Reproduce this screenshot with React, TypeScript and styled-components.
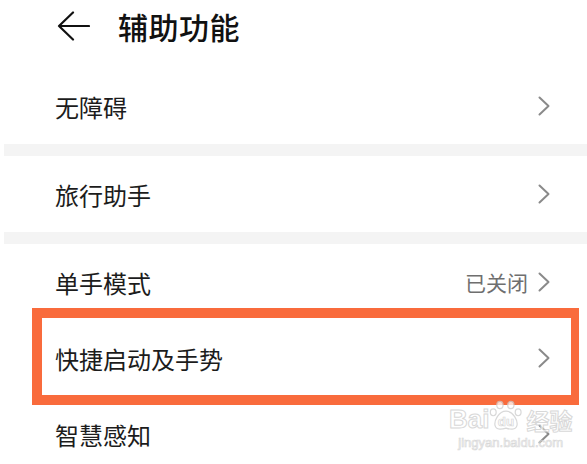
import React from "react";
import styled, { createGlobalStyle } from "styled-components";

const GlobalStyle = createGlobalStyle`
  html, body {
    margin: 0;
    padding: 0;
    background: #ffffff;
  }
  body {
    font-family: "Noto Sans CJK SC", "Noto Sans", sans-serif;
    overflow: hidden;
  }
`;

const Page = styled.div`
  width: 587px;
  height: 464px;
  position: relative;
  overflow: hidden;
  background: #ffffff;
`;

const Header = styled.div`
  height: 68px;
  box-sizing: border-box;
  padding: 0 0 17px 57px;
  display: flex;
  align-items: center;
  gap: 28px;
`;

const Title = styled.h1`
  margin: 0;
  font-size: 30px;
  font-weight: 500;
  color: #111111;
  letter-spacing: 0.5px;
`;

const Section = styled.div`
  display: flex;
  flex-direction: column;
`;

const Divider = styled.div`
  height: 12px;
  margin-left: 4px;
  background: #f4f4f4;
`;

const Row = styled.div`
  position: relative;
  height: 76px;
  display: flex;
  align-items: center;
  padding: 0 37px 0 55px;
`;

const Label = styled.span`
  flex: 1;
  font-size: 24px;
  color: #1c1c1c;
`;

const Value = styled.span`
  font-size: 21px;
  color: #6f6f6f;
  margin-right: 10px;
`;

const Highlight = styled.div`
  position: absolute;
  left: 32px;
  right: 8px;
  top: -12px;
  bottom: -9px;
  border: 10px solid #f96b3c;
  border-right-width: 8px;
  pointer-events: none;
`;

const Watermark = styled.div`
  position: absolute;
  left: 449px;
  top: 400px;
  display: flex;
  flex-direction: column;
  align-items: center;
  opacity: 0.75;
  pointer-events: none;
`;

const MarkLine = styled.div`
  display: flex;
  align-items: flex-end;
  font-family: "Liberation Sans", Arial, sans-serif;
  font-size: 26px;
  font-weight: 700;
  color: #ffffff;
  -webkit-text-stroke: 1px #cccccc;
  line-height: 1;
`;

const MarkCn = styled.span`
  font-family: "Noto Sans CJK SC", sans-serif;
  font-size: 23px;
  margin-left: 3px;
`;

const MarkUrl = styled.div`
  font-family: "Liberation Sans", Arial, sans-serif;
  font-size: 13px;
  color: #ffffff;
  -webkit-text-stroke: 0.7px #cccccc;
  margin-top: 3px;
`;

const BackArrow = () => (
  <svg width="33" height="30" viewBox="0 0 33 30">
    <path
      d="M16 1.5 L2 15 L16 28.5 M2 15 L32 15"
      fill="none"
      stroke="#111"
      strokeWidth="2.2"
      strokeLinecap="round"
      strokeLinejoin="round"
    />
  </svg>
);

const Chevron = () => (
  <svg width="12" height="20" viewBox="0 0 12 20">
    <path
      d="M1.5 1.5 L10.5 10 L1.5 18.5"
      fill="none"
      stroke="#8a8a8a"
      strokeWidth="2"
      strokeLinecap="round"
      strokeLinejoin="round"
    />
  </svg>
);

const Paw = () => (
  <svg width="34" height="32" viewBox="0 0 28 26">
    <g fill="#fff" stroke="#cccccc" strokeWidth="1">
      <ellipse cx="9" cy="4" rx="2.6" ry="3" />
      <ellipse cx="18" cy="4" rx="2.6" ry="3" />
      <ellipse cx="3.5" cy="10" rx="2.4" ry="2.8" />
      <ellipse cx="24" cy="10" rx="2.4" ry="2.8" />
      <path d="M14 9 C8 9 4 17 5 21 C6 25 11 24 14 23 C17 24 22 25 23 21 C24 17 20 9 14 9 Z" />
    </g>
    <text
      x="14"
      y="21"
      textAnchor="middle"
      fontFamily="Liberation Sans, Arial, sans-serif"
      fontSize="11"
      fontWeight="700"
      fill="#fff"
      stroke="#cccccc"
      strokeWidth="0.6"
    >
      du
    </text>
  </svg>
);

type Item = { label: string; value?: string; highlight?: boolean };

const groups: Item[][] = [
  [{ label: "无障碍" }],
  [{ label: "旅行助手" }],
  [
    { label: "单手模式", value: "已关闭" },
    { label: "快捷启动及手势", highlight: true },
    { label: "智慧感知" },
  ],
];

const App = () => {
  return (
    <Page>
      <GlobalStyle />
      <Header>
        <BackArrow />
        <Title>辅助功能</Title>
      </Header>
      {groups.map((group, gi) => (
        <React.Fragment key={gi}>
          {gi > 0 && <Divider />}
          <Section>
            {group.map((item) => (
              <Row key={item.label}>
                <Label>{item.label}</Label>
                {item.value && <Value>{item.value}</Value>}
                <Chevron />
                {item.highlight && <Highlight />}
              </Row>
            ))}
          </Section>
        </React.Fragment>
      ))}
      <Watermark>
        <MarkLine>
          Bai
          <Paw />
          <MarkCn>经验</MarkCn>
        </MarkLine>
        <MarkUrl>jingyan.baidu.com</MarkUrl>
      </Watermark>
    </Page>
  );
};

export default App;
